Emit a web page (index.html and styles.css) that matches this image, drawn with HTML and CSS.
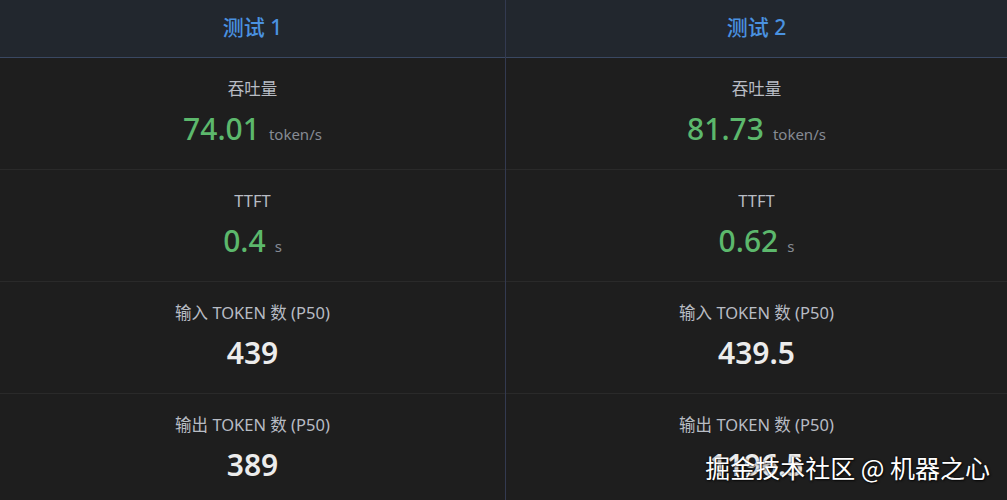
FILE: index.html
```html
<!DOCTYPE html>
<html lang="zh">
<head>
<meta charset="utf-8">
<link rel="stylesheet" href="styles.css">
</head>
<body>
<div class="board">
  <div class="col col-first">
    <div class="head">测试 1</div>
    <div class="cell"><div class="label">吞吐量</div><div class="val green">74.01<span class="unit">token/s</span></div></div>
    <div class="cell"><div class="label">TTFT</div><div class="val green">0.4<span class="unit">s</span></div></div>
    <div class="cell"><div class="label">输入 TOKEN 数 (P50)</div><div class="val white">439</div></div>
    <div class="cell"><div class="label">输出 TOKEN 数 (P50)</div><div class="val white">389</div></div>
  </div>
  <div class="col">
    <div class="head">测试 2</div>
    <div class="cell"><div class="label">吞吐量</div><div class="val green">81.73<span class="unit">token/s</span></div></div>
    <div class="cell"><div class="label">TTFT</div><div class="val green">0.62<span class="unit">s</span></div></div>
    <div class="cell"><div class="label">输入 TOKEN 数 (P50)</div><div class="val white">439.5</div></div>
    <div class="cell"><div class="label">输出 TOKEN 数 (P50)</div><div class="val white">1196.5</div></div>
  </div>
</div>
<div class="watermark">掘金技术社区 @ 机器之心</div>
</body>
</html>
```
FILE: styles.css
```css
html, body {
  margin: 0;
  padding: 0;
  background: #1e1e1e;
  width: 1007px;
  height: 500px;
  overflow: hidden;
  font-family: "Noto Sans", "Noto Sans CJK SC", sans-serif;
}
.board {
  display: flex;
  width: 1007px;
}
.col {
  flex: 1;
  display: flex;
  flex-direction: column;
}
.col-first {
  flex: 0 0 505px;
  border-right: 1px solid #333a50;
}
.head {
  height: 58px;
  box-sizing: border-box;
  padding-bottom: 5px;
  background: #22272e;
  border-bottom: 1px solid #3a4862;
  display: flex;
  align-items: center;
  justify-content: center;
  color: #4a92e0;
  font-size: 21px;
  font-weight: 500;
}
.cell {
  height: 112px;
  box-sizing: border-box;
  padding-top: 21px;
  border-bottom: 1px solid #2a2a2a;
  display: flex;
  flex-direction: column;
  align-items: center;
  gap: 11px;
}
.label {
  color: #b8bcc4;
  font-size: 16.5px;
  line-height: 20px;
}
.val {
  font-size: 30px;
  line-height: 38px;
  font-weight: 500;
  display: flex;
  align-items: baseline;
}
.green { color: #5cb86c; }
.white { color: #ececec; font-weight: 600; }
.unit {
  font-size: 15px;
  color: #868b94;
  font-weight: 400;
  margin-left: 9px;
}
.watermark {
  position: absolute;
  right: 17px;
  top: 450px;
  color: #ffffff;
  font-family: "Noto Sans CJK SC", sans-serif;
  font-size: 25px;
  line-height: 34px;
  text-shadow: 0 0 2px rgba(0,0,0,0.8), 1px 1px 2px rgba(0,0,0,0.7);
}
```
